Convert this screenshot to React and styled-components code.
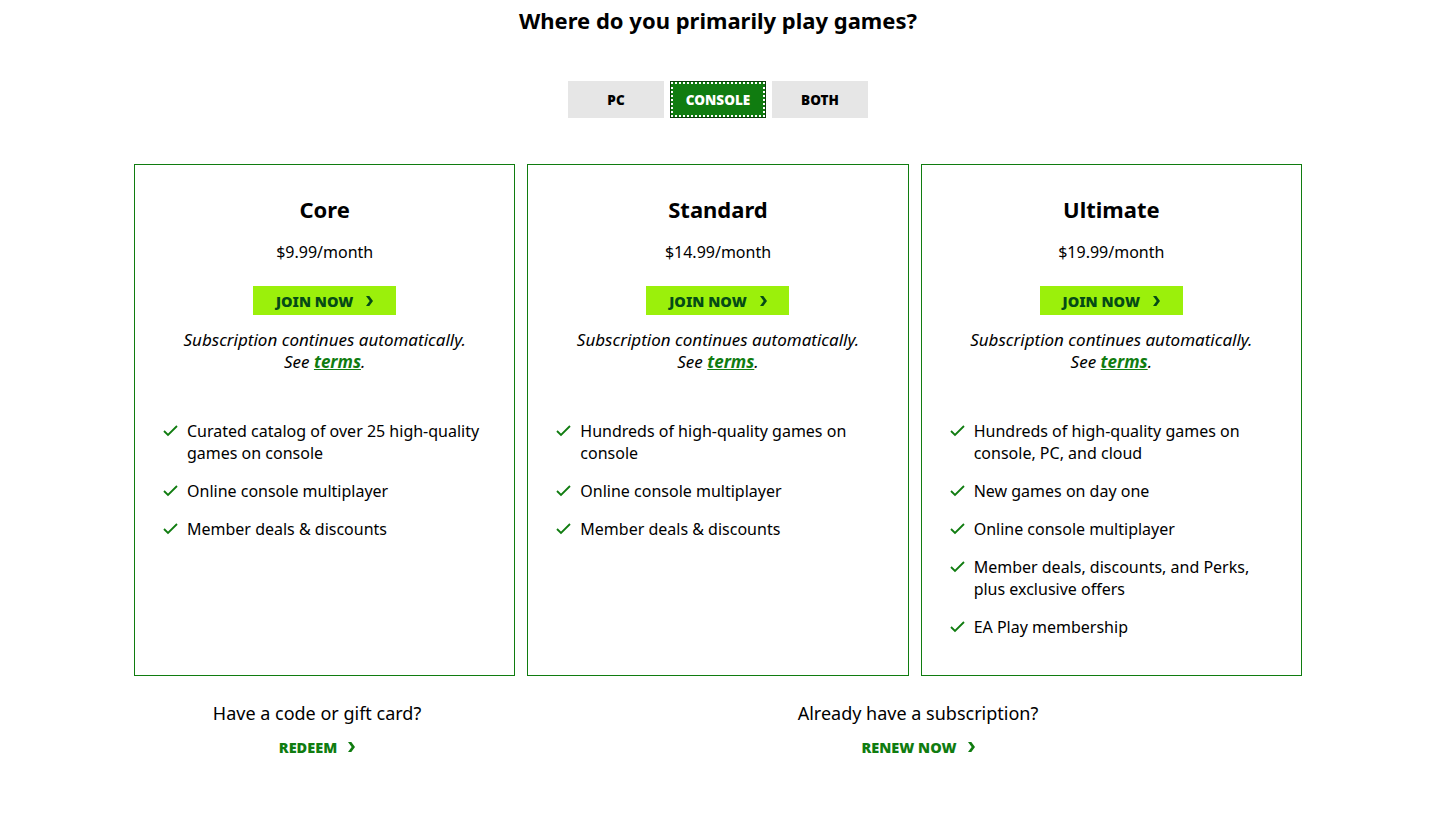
import React from 'react';
import styled, { createGlobalStyle } from 'styled-components';

const GlobalStyle = createGlobalStyle`
	body {
		margin: 0;
		background: #ffffff;
		font-family: 'Noto Sans', 'Open Sans', sans-serif;
		color: #000;
	}
`;

const Page = styled.div`
	width: 1168px;
	margin: 0 auto;
	padding: 4px 20px 40px 0;
	display: flex;
	flex-direction: column;
	align-items: center;
`;

const Heading = styled.h2`
	margin: 0;
	font-size: 22px;
	font-weight: 700;
	line-height: 32px;
`;

const Toggle = styled.div`
	display: flex;
	gap: 6px;
	margin-top: 45px;
`;

const ToggleButton = styled.button`
	width: 96px;
	height: 37px;
	border: 1px solid ${p => (p.active ? '#0b3d0b' : '#e6e6e6')};
	background: ${p => (p.active ? '#107c10' : '#e6e6e6')};
	color: ${p => (p.active ? '#fff' : '#000')};
	outline: ${p => (p.active ? '2px dotted #fff' : 'none')};
	outline-offset: -3px;
	font-family: 'Noto Sans', sans-serif;
	font-size: 13.5px;
	font-weight: 900;
	text-transform: uppercase;
	padding: 0;
`;

const Cards = styled.div`
	display: grid;
	grid-template-columns: repeat(3, 1fr);
	gap: 12px;
	width: 100%;
	margin-top: 46px;
`;

const Card = styled.div`
	height: 512px;
	box-sizing: border-box;
	border: 1px solid #107c10;
	padding: 29px 26px 0;
	display: flex;
	flex-direction: column;
	align-items: center;
`;

const Title = styled.h3`
	margin: 0;
	font-size: 22px;
	font-weight: 700;
	line-height: 30px;
`;

const Price = styled.div`
	margin-top: 17px;
	font-size: 16px;
	line-height: 22px;
`;

const JoinButton = styled.button`
	margin-top: 23px;
	width: 143px;
	height: 29px;
	border: none;
	background: #9bf00b;
	color: #054b16;
	font-family: 'Noto Sans', sans-serif;
	font-size: 14.5px;
	font-weight: 900;
	display: flex;
	align-items: center;
	justify-content: center;
	gap: 13px;
	padding: 0;
`;

const Note = styled.p`
	margin: 14px 0 0;
	font-size: 17px;
	font-style: italic;
	line-height: 22px;
	text-align: center;
`;

const Terms = styled.a`
	color: #107c10;
	font-weight: 700;
	text-decoration: underline;
`;

const Features = styled.ul`
	list-style: none;
	margin: 47px 0 0;
	padding: 0 0 0 2px;
	align-self: stretch;
	display: flex;
	flex-direction: column;
	gap: 16px;
`;

const Feature = styled.li`
	display: flex;
	gap: 9px;
	font-size: 16px;
	line-height: 22px;
	svg {
		flex: none;
		margin-top: 5px;
	}
`;

const Footer = styled.div`
	display: grid;
	grid-template-columns: 366px 1fr;
	column-gap: 34px;
	width: 100%;
	margin-top: 24px;
`;

const Help = styled.div`
	display: flex;
	flex-direction: column;
	align-items: center;
`;

const HelpText = styled.div`
	font-size: 18px;
	line-height: 26px;
`;

const HelpLink = styled.a`
	margin-top: 11px;
	color: #107c10;
	font-size: 14.5px;
	font-weight: 900;
	display: flex;
	align-items: center;
	gap: 11px;
	text-decoration: none;
	text-transform: uppercase;
`;

const Chevron = ({ color }) => (
	<svg width="7" height="10" viewBox="0 0 7 10">
		<path d="M0 0 H3.3 L7 5 L3.3 10 H0 L3.7 5 Z" fill={color} />
	</svg>
);

const Check = () => (
	<svg width="15" height="12" viewBox="0 0 15 12">
		<polyline points="1,6 5,10 14,1" fill="none" stroke="#107c10" strokeWidth="1.8" />
	</svg>
);

const plans = [
	{
		name: 'Core',
		price: '$9.99/month',
		features: [
			'Curated catalog of over 25 high-quality games on console',
			'Online console multiplayer',
			'Member deals & discounts',
		],
	},
	{
		name: 'Standard',
		price: '$14.99/month',
		features: [
			'Hundreds of high-quality games on console',
			'Online console multiplayer',
			'Member deals & discounts',
		],
	},
	{
		name: 'Ultimate',
		price: '$19.99/month',
		features: [
			'Hundreds of high-quality games on console, PC, and cloud',
			'New games on day one',
			'Online console multiplayer',
			'Member deals, discounts, and Perks, plus exclusive offers',
			'EA Play membership',
		],
	},
];

const App = () => {
	return (
		<>
			<GlobalStyle />
			<Page>
				<Heading>Where do you primarily play games?</Heading>
				<Toggle>
					<ToggleButton>PC</ToggleButton>
					<ToggleButton active>Console</ToggleButton>
					<ToggleButton>Both</ToggleButton>
				</Toggle>
				<Cards>
					{plans.map(plan => (
						<Card key={plan.name}>
							<Title>{plan.name}</Title>
							<Price>{plan.price}</Price>
							<JoinButton>
								JOIN NOW <Chevron color="#054b16" />
							</JoinButton>
							<Note>
								Subscription continues automatically.
								<br />
								See <Terms href="#">terms</Terms>.
							</Note>
							<Features>
								{plan.features.map(f => (
									<Feature key={f}>
										<Check />
										<span>{f}</span>
									</Feature>
								))}
							</Features>
						</Card>
					))}
				</Cards>
				<Footer>
					<Help>
						<HelpText>Have a code or gift card?</HelpText>
						<HelpLink href="#">
							Redeem <Chevron color="#107c10" />
						</HelpLink>
					</Help>
					<Help>
						<HelpText>Already have a subscription?</HelpText>
						<HelpLink href="#">
							Renew now <Chevron color="#107c10" />
						</HelpLink>
					</Help>
				</Footer>
			</Page>
		</>
	);
};

export default App;
